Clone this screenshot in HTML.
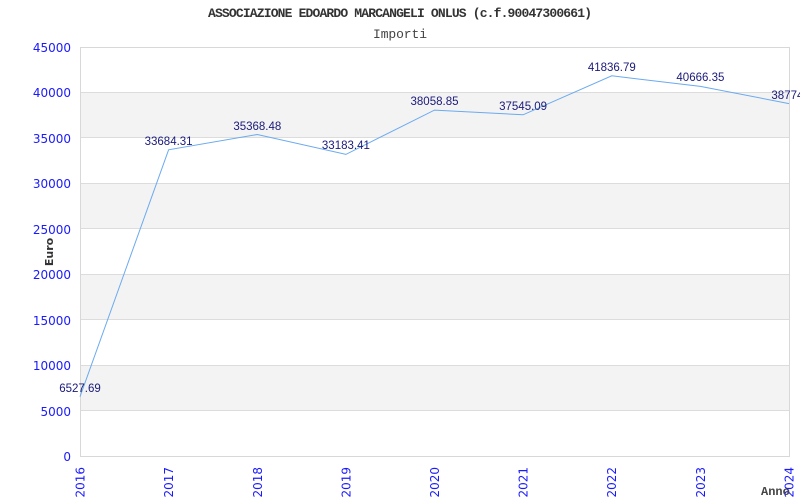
<!DOCTYPE html>
<html><head><meta charset="utf-8"><style>
html,body{margin:0;padding:0;background:#fff;}
svg{display:block;}
</style></head><body>
<svg width="800" height="500" xmlns="http://www.w3.org/2000/svg">
<rect width="800" height="500" fill="#fff"/>
<g fill="#f3f3f3">
<rect x="80" y="92.4" width="710" height="45.4"/>
<rect x="80" y="183.3" width="710" height="45.4"/>
<rect x="80" y="274.2" width="710" height="45.4"/>
<rect x="80" y="365.1" width="710" height="45.4"/>
</g>
<g stroke="#dcdcdc" stroke-width="1">
<line x1="80" y1="92.5" x2="790" y2="92.5"/>
<line x1="80" y1="137.5" x2="790" y2="137.5"/>
<line x1="80" y1="183.5" x2="790" y2="183.5"/>
<line x1="80" y1="228.5" x2="790" y2="228.5"/>
<line x1="80" y1="274.5" x2="790" y2="274.5"/>
<line x1="80" y1="319.5" x2="790" y2="319.5"/>
<line x1="80" y1="365.5" x2="790" y2="365.5"/>
<line x1="80" y1="410.5" x2="790" y2="410.5"/>
</g>
<rect x="80.5" y="47.5" width="709" height="409" fill="none" stroke="#d8d8d8"/>
<polyline fill="none" stroke="#6aaaf0" stroke-width="1" points="80,396.7 168.6,149.8 257.3,134.5 345.9,154.4 434.5,110.1 523.1,114.8 611.8,75.8 700.4,86.4 789,103.6"/>
<g font-family="Liberation Sans, sans-serif" font-size="11.5" fill="#1a1a7a" text-anchor="middle">
<text x="80" y="392">6527.69</text>
<text x="168.6" y="145">33684.31</text>
<text x="257.3" y="130">35368.48</text>
<text x="345.9" y="149">33183.41</text>
<text x="434.5" y="105">38058.85</text>
<text x="523.1" y="110">37545.09</text>
<text x="611.8" y="71">41836.79</text>
<text x="700.4" y="81">40666.35</text>
<text x="789" y="99">38774.</text>
</g>
<g font-family="DejaVu Sans, sans-serif" font-size="12" fill="#1a1aff" text-anchor="end">
<text x="71" y="52">45000</text>
<text x="71" y="97">40000</text>
<text x="71" y="143">35000</text>
<text x="71" y="188">30000</text>
<text x="71" y="234">25000</text>
<text x="71" y="279">20000</text>
<text x="71" y="325">15000</text>
<text x="71" y="370">10000</text>
<text x="71" y="416">5000</text>
<text x="71" y="461">0</text>
</g>
<g font-family="DejaVu Sans, sans-serif" font-size="12" fill="#1a1aff" text-anchor="end">
<text transform="translate(84.5,467) rotate(-90)">2016</text>
<text transform="translate(173,467) rotate(-90)">2017</text>
<text transform="translate(262,467) rotate(-90)">2018</text>
<text transform="translate(350.5,467) rotate(-90)">2019</text>
<text transform="translate(439,467) rotate(-90)">2020</text>
<text transform="translate(527.5,467) rotate(-90)">2021</text>
<text transform="translate(616,467) rotate(-90)">2022</text>
<text transform="translate(705,467) rotate(-90)">2023</text>
<text transform="translate(793.5,467) rotate(-90)">2024</text>
</g>
<text transform="translate(53,252) rotate(-90)" font-family="DejaVu Sans, sans-serif" font-size="11" font-weight="bold" fill="#333" text-anchor="middle">Euro</text>
<text x="761" y="495" font-family="Liberation Mono, monospace" font-size="12" font-weight="bold" fill="#444">Anno</text>
<text x="400" y="17" font-family="Liberation Mono, monospace" font-size="13" font-weight="bold" fill="#333" text-anchor="middle" textLength="384">ASSOCIAZIONE EDOARDO MARCANGELI ONLUS (c.f.90047300661)</text>
<text x="400" y="38" font-family="Liberation Mono, monospace" font-size="13" fill="#444" text-anchor="middle" textLength="54">Importi</text>
</svg>
</body></html>
